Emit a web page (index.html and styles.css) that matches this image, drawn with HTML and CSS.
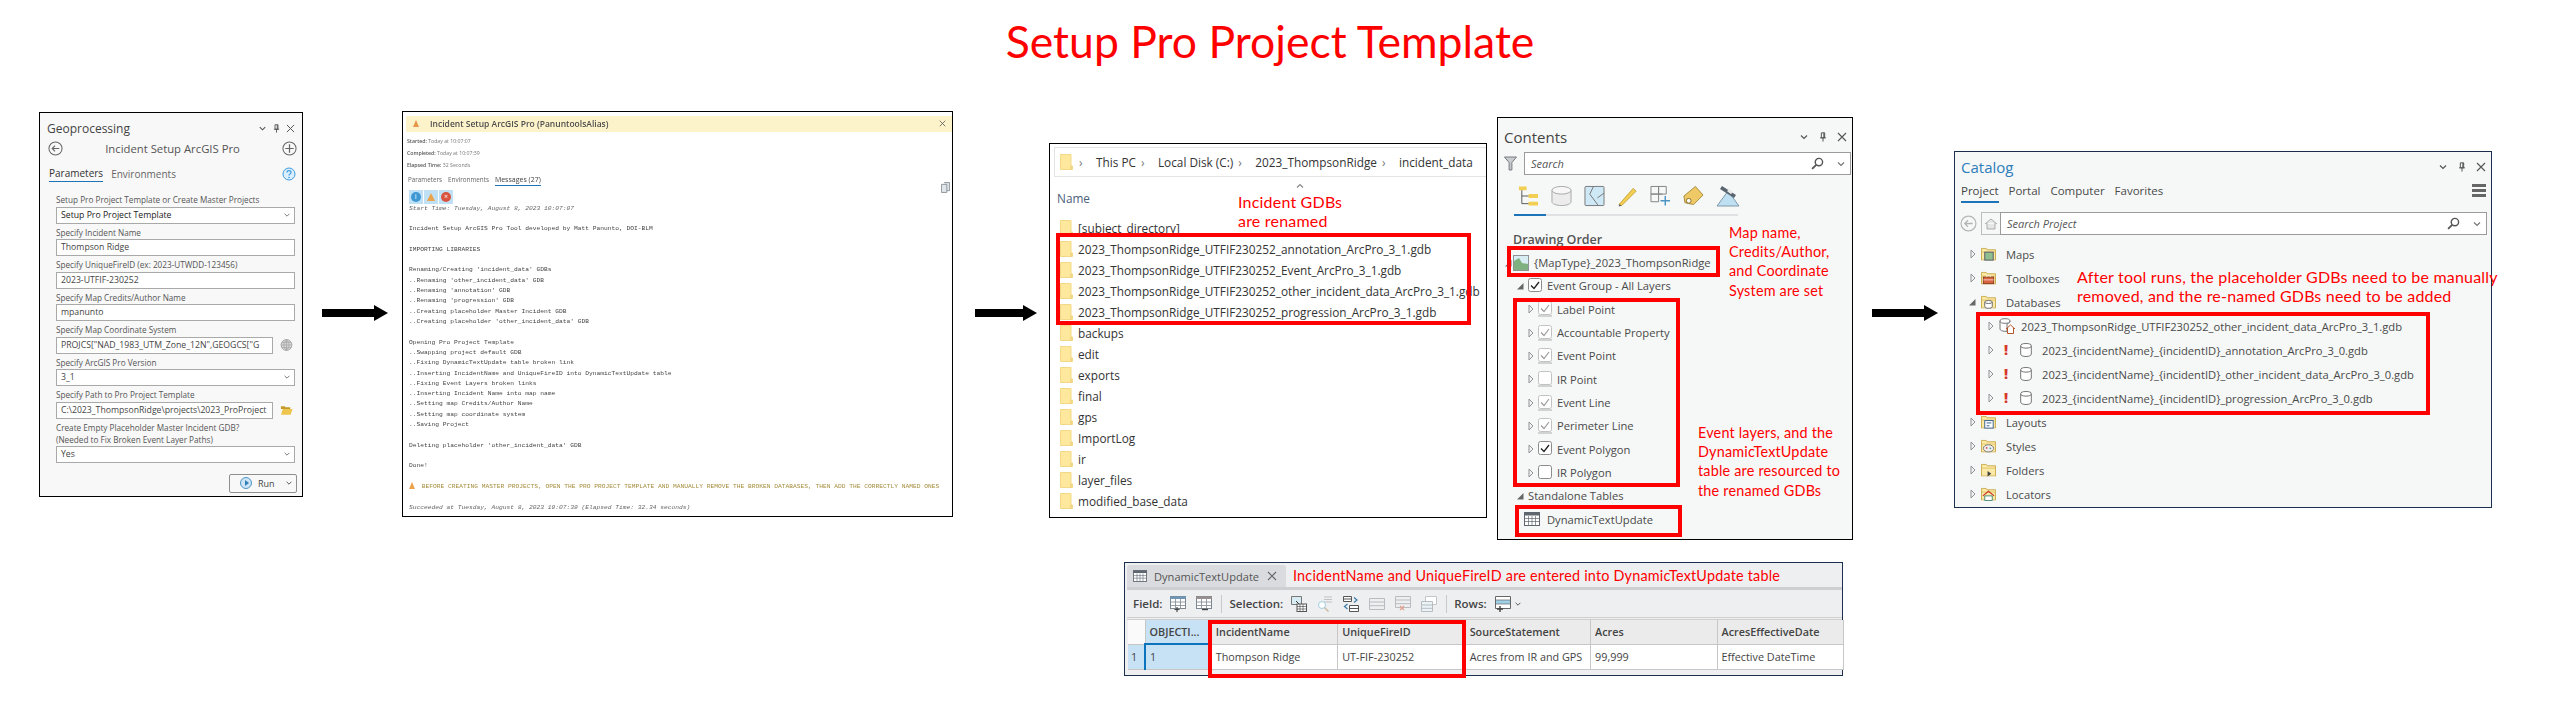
FILE: index.html
```html
<!DOCTYPE html>
<html lang="en">
<head>
  <meta charset="UTF-8">
  <title>Setup Pro Project Template</title>
  <link rel="stylesheet" href="styles.css">
</head>
<body>
  <svg class="sprite" width="0" height="0">
    <defs>
      <symbol id="chev" viewBox="0 0 10 10"><path d="M2 3.500 5 6.500 8 3.500" fill="none" stroke="currentColor" stroke-width="1.200"/></symbol>
      <symbol id="pin" viewBox="0 0 10 12"><path d="M3 1h4v6H3zM1.500 7h7M5 7v4.500M6 1v6" fill="none" stroke="currentColor" stroke-width="1.200"/></symbol>
      <symbol id="close" viewBox="0 0 10 10"><path d="M1 1 9 9M9 1 1 9" fill="none" stroke="currentColor" stroke-width="1.100"/></symbol>
      <symbol id="back" viewBox="0 0 16 16"><circle cx="8" cy="8" r="7" fill="none" stroke="currentColor" stroke-width="1.100"/><path d="M12 8H4.500M7.500 5 4.500 8l3 3" fill="none" stroke="currentColor" stroke-width="1.200"/></symbol>
      <symbol id="plus" viewBox="0 0 16 16"><circle cx="8" cy="8" r="7" fill="none" stroke="currentColor" stroke-width="1.100"/><path d="M8 3.500v9M3.500 8h9" stroke="currentColor" stroke-width="1.300"/></symbol>
      <symbol id="help" viewBox="0 0 14 14"><circle cx="7" cy="7" r="6" fill="#dcefff" stroke="#3d9be0"/><path d="M5 5.400C5 3 9 3 9 5.400 9 7 7 6.800 7 8.600" fill="none" stroke="#3d9be0" stroke-width="1.200"/><circle cx="7" cy="10.500" r=".8" fill="#3d9be0"/></symbol>
      <symbol id="globe" viewBox="0 0 14 14"><circle cx="7" cy="7" r="6.300" fill="#d8d8d8" stroke="#9a9a9a"/><path d="M1 7h12M7 1v12M2 4h10M2 10h10M7 1C3 4 3 10 7 13M7 1c4 3 4 9 0 12" fill="none" stroke="#9a9a9a" stroke-width=".7"/></symbol>
      <symbol id="openfolder" viewBox="0 0 14 12"><path d="M1 2h4l1 1h5v2H1z" fill="#c49a2a"/><path d="M1 11 3 5h10.500l-2 6z" fill="#eec64e"/></symbol>
      <symbol id="efolder" viewBox="0 0 13 16"><path d="M.5.500h10.500v11.500h1.500v3.500H.5z" fill="#fee89d" stroke="#f3d985"/><path d="M11 12v3.500" stroke="#e6c870"/></symbol>
      <symbol id="caret" viewBox="0 0 6 10"><path d="M1 1 5 5 1 9z" fill="#f3f3f3" stroke="#8f9396"/></symbol>
      <symbol id="caretdown" viewBox="0 0 8 8"><path d="M7.500 1v6.500H1z" fill="#666"/></symbol>
      <symbol id="boxon" viewBox="0 0 14 16"><rect x=".5" y=".5" width="13" height="13" rx="2" fill="#fff" stroke="#8c8c8c"/><path d="M3 7.500 6 10.500 11 4" fill="none" stroke="#222" stroke-width="1.300"/></symbol>
      <symbol id="boxdim" viewBox="0 0 14 16"><rect x=".5" y=".5" width="13" height="13" rx="2" fill="#fff" stroke="#c2c2c2"/><path d="M3 7.500 6 10.500 11 4" fill="none" stroke="#9c9c9c" stroke-width="1.200"/><path d="M0 15h14" stroke="#c9c9c9" stroke-width="1.600"/></symbol>
      <symbol id="boxoffdim" viewBox="0 0 14 16"><rect x=".5" y=".5" width="13" height="13" rx="2" fill="#fff" stroke="#c2c2c2"/><path d="M0 15h14" stroke="#c9c9c9" stroke-width="1.600"/></symbol>
      <symbol id="boxoff" viewBox="0 0 14 16"><rect x=".5" y=".5" width="13" height="13" rx="2" fill="#fff" stroke="#8c8c8c"/></symbol>
      <symbol id="mapicon" viewBox="0 0 16 16"><rect x=".5" y=".5" width="15" height="15" fill="#d7ecf3" stroke="#8f9396"/><path d="M1 15V6l5-3 3 5 6 1v6z" fill="#7fb07f"/></symbol>
      <symbol id="table" viewBox="0 0 16 14"><rect x=".5" y=".5" width="15" height="13" fill="#fff" stroke="#5f6670"/><path d="M0 .5h16v3H0z" fill="#5f6670"/><path d="M1 6.500h14M1 9.500h14M4.500 4v9M8 4v9M11.500 4v9" stroke="#5f6670" stroke-width=".7"/></symbol>
      <symbol id="gdb" viewBox="0 0 12 14"><path d="M.7 2.800v8.400c0 1.300 2.400 2.300 5.300 2.300s5.300-1 5.300-2.300V2.800" fill="#fff" stroke="#777"/><ellipse cx="6" cy="2.800" rx="5.300" ry="2.300" fill="#fff" stroke="#777"/></symbol>
      <symbol id="gdbhome" viewBox="0 0 16 16"><path d="M1 3v8c0 1.300 2.200 2.300 5 2.300h2V6l3-2V3" fill="#fff" stroke="#777"/><ellipse cx="6" cy="3" rx="5" ry="2.300" fill="#fff" stroke="#777"/><path d="M7 11l4.500-4 4.500 4M8.500 10v5.500h6V10" fill="#fff" stroke="#b4572a"/></symbol>
      <symbol id="catfolder" viewBox="0 0 16 14"><path d="M.5 2.500V1h5l1 1.500h9v11H.5z" fill="#fbe9a8" stroke="#c8a848"/><path d="M.5 5h15" stroke="#e1c363"/></symbol>
      <symbol id="cat-maps" viewBox="0 0 16 14"><use href="#catfolder" width="16" height="14"/><rect x="4" y="5" width="9" height="8.500" fill="#8fbf8f" stroke="#556"/></symbol>
      <symbol id="cat-tool" viewBox="0 0 16 14"><use href="#catfolder" width="16" height="14"/><rect x="2.500" y="6" width="11" height="7" fill="#d9623f" stroke="#8a3a22"/><path d="M6 6V4.500h4V6M2.500 9h11" fill="none" stroke="#fff" stroke-width=".7"/></symbol>
      <symbol id="cat-db" viewBox="0 0 16 14"><use href="#catfolder" width="16" height="14"/><path d="M4 7v5c0 1 1.800 1.700 4 1.700s4-.7 4-1.700V7" fill="#fff" stroke="#666"/><ellipse cx="8" cy="7" rx="4" ry="1.600" fill="#fff" stroke="#666"/></symbol>
      <symbol id="cat-layout" viewBox="0 0 16 14"><use href="#catfolder" width="16" height="14"/><rect x="4" y="5.500" width="9" height="8" fill="#fff" stroke="#2f5f8f"/><path d="M6 8h5M6 11h3" stroke="#2f5f8f"/></symbol>
      <symbol id="cat-style" viewBox="0 0 16 14"><use href="#catfolder" width="16" height="14"/><ellipse cx="8" cy="9.500" rx="5.500" ry="3.800" fill="#eee" stroke="#777"/><circle cx="6" cy="9" r="1" fill="#c55"/><circle cx="10" cy="9.500" r="1" fill="#59a"/></symbol>
      <symbol id="cat-folder" viewBox="0 0 16 14"><use href="#catfolder" width="16" height="14"/><path d="M7 8l4 3-4 3z" fill="#444"/></symbol>
      <symbol id="cat-loc" viewBox="0 0 16 14"><use href="#catfolder" width="16" height="14"/><path d="M2 9l6-5 6 5" fill="none" stroke="#c9352a" stroke-width="1.300"/><path d="M4 9h8v5H4z" fill="#fff" stroke="#3f8a6f"/></symbol>
      <symbol id="search" viewBox="0 0 12 12"><circle cx="7.300" cy="4.700" r="3.400" fill="none" stroke="currentColor" stroke-width="1.300"/><path d="M4.800 7.200 1 11" stroke="currentColor" stroke-width="1.700"/></symbol>
      <symbol id="tb-add" viewBox="0 0 16 16"><rect x=".5" y=".5" width="15" height="12" fill="#fff" stroke="#7e8892"/><path d="M0 .5h16v2.500H0z" fill="#6f97b5"/><path d="M1 6h14M1 9.500h14M5.500 3v10M10.500 3v10" stroke="#7e8892" stroke-width=".8"/><path d="M7 11v5M4.500 13.500h5" stroke="#444" stroke-width="1.200"/></symbol>
      <symbol id="tb-del" viewBox="0 0 16 16"><rect x=".5" y=".5" width="15" height="12" fill="#fff" stroke="#7e8892"/><path d="M0 .5h16v2.500H0z" fill="#9a8f8f"/><path d="M1 6h14M1 9.500h14M5.500 3v10M10.500 3v10" stroke="#7e8892" stroke-width=".8"/><path d="M6 13.500h6" stroke="#444" stroke-width="1.400"/></symbol>
      <symbol id="tb-sel" viewBox="0 0 16 16"><path d="M.5.500h10v8h-10z" fill="#d7ecf3" stroke="#777"/><path d="M5 5l3 3" stroke="#333"/><rect x="6" y="8" width="9.500" height="7.500" fill="#fff" stroke="#555"/><path d="M6 10.500h10M6 13h10M9 8v8M12 8v8" stroke="#555" stroke-width=".7"/></symbol>
      <symbol id="tb-zoom" viewBox="0 0 16 16"><path d="M7 1h8M7 3.500h8M7 6h8" stroke="#bfc3c7"/><circle cx="5" cy="9" r="3.500" fill="#fff" stroke="#9fd0de"/><path d="M7.500 11.500l4 4" stroke="#c9b9a0" stroke-width="1.500"/></symbol>
      <symbol id="tb-swap" viewBox="0 0 16 16"><path d="M.5.500h8v5h-8zM6.500 9.500h9v6h-9zM.5 3h8M6.500 12.500h9" fill="#fff" stroke="#555"/><path d="M11 1.500l3 2.500-3 2.500M4.500 8 1.500 10.500 4.500 13" fill="none" stroke="#3a7aa8" stroke-width="1.200"/></symbol>
      <symbol id="tb-lines" viewBox="0 0 16 14"><path d="M.5 1.500h15v11H.5zM.5 5h15M.5 8.700h15" fill="none" stroke="#b8bcc0"/></symbol>
      <symbol id="tb-x" viewBox="0 0 16 16"><path d="M.5.500h15v11H.5zM.5 4h15M.5 7.700h15" fill="none" stroke="#b8bcc0"/><path d="M5 10l4 4M9 10l-4 4" stroke="#e3a08f" stroke-width="1.300"/></symbol>
      <symbol id="tb-copy" viewBox="0 0 16 16"><path d="M4.500.500h11v8h-11z" fill="#fff" stroke="#c3c7cb"/><path d="M.5 5.500h11v10H.5zM.5 9h11M.5 12.300h11" fill="#eaf4f8" stroke="#b8bcc0"/></symbol>
      <symbol id="tb-rows" viewBox="0 0 16 16"><path d="M.5.500h15v12H.5z" fill="#fff" stroke="#666"/><path d="M1 4h14v4H1z" fill="#9fd0e6"/><path d="M1 4h14M1 8h14" stroke="#666" stroke-width=".7"/><path d="M5 10v6M2 13h6" stroke="#444" stroke-width="1.400"/></symbol>
    </defs>
  </svg>

  <h1 class="page-title">Setup Pro Project Template</h1>

  <main class="top-row">
    <!-- geoprocessing pane -->
    <section class="panel gp">
      <div class="pane-head">
        <span class="gp-title">Geoprocessing</span>
        <span class="win-btns"><svg class="wb"><use href="#chev"/></svg><svg class="wb"><use href="#pin"/></svg><svg class="wb"><use href="#close"/></svg></span>
      </div>
      <div class="gp-tool">
        <svg class="gp-round"><use href="#back"/></svg>
        <span class="gp-tool-name">Incident Setup ArcGIS Pro</span>
        <svg class="gp-round"><use href="#plus"/></svg>
      </div>
      <div class="gp-tabs">
        <span class="gp-tab on">Parameters</span>
        <span class="gp-tab">Environments</span>
        <svg class="gp-help"><use href="#help"/></svg>
      </div>
      <div class="gp-fields">
        <div class="field"><label>Setup Pro Project Template or Create Master Projects</label><div class="inp strong">Setup Pro Project Template<svg class="inp-chev"><use href="#chev"/></svg></div></div>
        <div class="field"><label>Specify Incident Name</label><div class="inp">Thompson Ridge</div></div>
        <div class="field"><label>Specify UniqueFireID (ex: 2023-UTWDD-123456)</label><div class="inp">2023-UTFIF-230252</div></div>
        <div class="field"><label>Specify Map Credits/Author Name</label><div class="inp">mpanunto</div></div>
        <div class="field"><label>Specify Map Coordinate System</label><div class="inp-row"><div class="inp clip">PROJCS["NAD_1983_UTM_Zone_12N",GEOGCS["G</div><svg class="inp-side"><use href="#globe"/></svg></div></div>
        <div class="field"><label>Specify ArcGIS Pro Version</label><div class="inp">3_1<svg class="inp-chev"><use href="#chev"/></svg></div></div>
        <div class="field"><label>Specify Path to Pro Project Template</label><div class="inp-row"><div class="inp clip">C:\2023_ThompsonRidge\projects\2023_ProProject</div><svg class="inp-side"><use href="#openfolder"/></svg></div></div>
        <div class="field tall"><label>Create Empty Placeholder Master Incident GDB?<br>(Needed to Fix Broken Event Layer Paths)</label><div class="inp">Yes<svg class="inp-chev"><use href="#chev"/></svg></div></div>
      </div>
      <div class="gp-foot">
        <button class="run-btn"><span class="run-dot"></span>Run<svg class="run-chev"><use href="#chev"/></svg></button>
      </div>
    </section>

    <svg class="arrow arrow-a" viewBox="0 0 66 16"><path d="M0 4h52V0l14 8-14 8v-4H0z"/></svg>

    <!-- tool result -->
    <section class="panel result">
      <div class="res-bar">
        <span class="res-warn"></span>
        <span class="res-title">Incident Setup ArcGIS Pro (PanuntoolsAlias)</span>
        <svg class="res-close"><use href="#close"/></svg>
      </div>
      <ul class="res-meta">
        <li><b>Started:</b> Today at 10:07:07</li>
        <li><b>Completed:</b> Today at 10:07:39</li>
        <li><b>Elapsed Time:</b> 32 Seconds</li>
      </ul>
      <div class="res-tabs"><span>Parameters</span><span>Environments</span><span class="on">Messages (27)</span></div>
      <div class="res-icons">
        <span class="res-ic"><i class="dot-info">i</i></span>
        <span class="res-ic"><i class="tri"></i></span>
        <span class="res-ic"><i class="dot-err">×</i></span>
      </div>
      <pre class="res-log"><em>Start Time: Tuesday, August 8, 2023 10:07:07</em>

Incident Setup ArcGIS Pro Tool developed by Matt Panunto, DOI-BLM

IMPORTING LIBRARIES

Renaming/Creating 'incident_data' GDBs
..Renaming 'other_incident_data' GDB
..Renaming 'annotation' GDB
..Renaming 'progression' GDB
..Creating placeholder Master Incident GDB
..Creating placeholder 'other_incident_data' GDB

Opening Pro Project Template
..Swapping project default GDB
..Fixing DynamicTextUpdate table broken link
..Inserting IncidentName and UniqueFireID into DynamicTextUpdate table
..Fixing Event Layers broken links
..Inserting Incident Name into map name
..Setting map Credits/Author Name
..Setting map coordinate system
..Saving Project

Deleting placeholder 'other_incident_data' GDB

Done!

<span class="log-warn"><i class="tri"></i> BEFORE CREATING MASTER PROJECTS, OPEN THE PRO PROJECT TEMPLATE AND MANUALLY REMOVE THE BROKEN DATABASES, THEN ADD THE CORRECTLY NAMED ONES</span>

<em>Succeeded at Tuesday, August 8, 2023 10:07:39 (Elapsed Time: 32.34 seconds)</em></pre>
      <svg class="res-copy" viewBox="0 0 10 12"><path d="M.5 2.500h6v9h-6zM3.500.5h6v9h-3" fill="#dfe6ea" stroke="#8a8f94"/></svg>
    </section>

    <svg class="arrow arrow-b" viewBox="0 0 62 16"><path d="M0 4h48V0l14 8-14 8v-4H0z"/></svg>

    <!-- windows explorer -->
    <section class="panel explorer">
      <div class="crumbs">
        <svg class="crumb-folder"><use href="#efolder"/></svg>
        <span class="crumb-sep">›</span><span>This PC</span>
        <span class="crumb-sep">›</span><span>Local Disk (C:)</span>
        <span class="crumb-sep">›</span><span>2023_ThompsonRidge</span>
        <span class="crumb-sep">›</span><span>incident_data</span>
      </div>
      <div class="name-head"><span>Name</span><svg class="sort-up"><use href="#chev"/></svg></div>
      <ul class="files">
        <li><svg class="fi"><use href="#efolder"/></svg>[subject_directory]</li>
        <li><svg class="fi"><use href="#efolder"/></svg>2023_ThompsonRidge_UTFIF230252_annotation_ArcPro_3_1.gdb</li>
        <li><svg class="fi"><use href="#efolder"/></svg>2023_ThompsonRidge_UTFIF230252_Event_ArcPro_3_1.gdb</li>
        <li><svg class="fi"><use href="#efolder"/></svg>2023_ThompsonRidge_UTFIF230252_other_incident_data_ArcPro_3_1.gdb</li>
        <li><svg class="fi"><use href="#efolder"/></svg>2023_ThompsonRidge_UTFIF230252_progression_ArcPro_3_1.gdb</li>
        <li><svg class="fi"><use href="#efolder"/></svg>backups</li>
        <li><svg class="fi"><use href="#efolder"/></svg>edit</li>
        <li><svg class="fi"><use href="#efolder"/></svg>exports</li>
        <li><svg class="fi"><use href="#efolder"/></svg>final</li>
        <li><svg class="fi"><use href="#efolder"/></svg>gps</li>
        <li><svg class="fi"><use href="#efolder"/></svg>ImportLog</li>
        <li><svg class="fi"><use href="#efolder"/></svg>ir</li>
        <li><svg class="fi"><use href="#efolder"/></svg>layer_files</li>
        <li><svg class="fi"><use href="#efolder"/></svg>modified_base_data</li>
      </ul>
      <p class="note big note-gdb">Incident GDBs<br>are renamed</p>
      <div class="hl hl-gdb"></div>
    </section>

    <!-- contents pane -->
    <section class="panel contents">
      <div class="pane-head">
        <span class="pane-title">Contents</span>
        <span class="win-btns big"><svg class="wb"><use href="#chev"/></svg><svg class="wb"><use href="#pin"/></svg><svg class="wb"><use href="#close"/></svg></span>
      </div>
      <div class="con-search">
        <svg class="con-filter" viewBox="0 0 14 16"><path d="M.5 1h13L8.500 7v8h-3V7z" fill="#c9cccf" stroke="#6f7377"/></svg>
        <div class="search-box"><em>Search</em><svg class="sb-ic"><use href="#search"/></svg><svg class="sb-chev"><use href="#chev"/></svg></div>
      </div>
      <div class="con-tools">
        <svg class="ct" viewBox="0 0 22 22"><path d="M1 1h8v4H1zM11 9h10v4H11zM11 17h10v4H11z" fill="#f2cf52"/><path d="M4 5v14h7M4 11h7" fill="none" stroke="#555"/></svg>
        <svg class="ct" viewBox="0 0 22 22"><path d="M1 5v12c0 2.200 4.500 4 10 4s10-1.800 10-4V5" fill="#ececec" stroke="#a6a6a6"/><ellipse cx="11" cy="5" rx="10" ry="4" fill="#f7f7f7" stroke="#a6a6a6"/></svg>
        <svg class="ct" viewBox="0 0 22 22"><rect x="1" y="1" width="20" height="20" rx="1" fill="#cfe8f5" stroke="#777"/><path d="M10 1 6 9l9 12M14 13l7-5" fill="none" stroke="#777"/></svg>
        <svg class="ct" viewBox="0 0 22 22"><path d="M2 20 17 3l3 3L5 21z" fill="#f2cf52" stroke="#b38d23" stroke-width=".7"/><path d="M2 20l3 1-3 1z" fill="#555"/></svg>
        <svg class="ct" viewBox="0 0 22 22"><path d="M1 1h8v8H1zM9 1h8v8H9zM1 9h8v8H1zM9 9h4" fill="none" stroke="#808080"/><path d="M16 11v10M11 16h10" stroke="#4b94c4" stroke-width="1.500"/></svg>
        <svg class="ct" viewBox="0 0 22 22"><path d="M13 1l8 9-10 10-9-2-1-7z" fill="#efc966" stroke="#a58a3b"/><circle cx="6" cy="16" r="2.500" fill="#fff" stroke="#8a6d28"/></svg>
        <svg class="ct wide" viewBox="0 0 24 22"><path d="M1 21 12 6l11 15z" fill="#bfe0f2" stroke="#7e98a8"/><path d="M6 1l14 9-2 3L4 4z" fill="#5a6570"/><path d="M12 5l4 3" stroke="#e8e8e8" stroke-width="3"/></svg>
      </div>
      <div class="con-rule"><span></span></div>
      <div class="con-heading">Drawing Order</div>
      <ul class="tree">
        <li class="row-map"><svg class="cd"><use href="#caretdown"/></svg><svg class="ic16"><use href="#mapicon"/></svg>{MapType}_2023_ThompsonRidge</li>
        <li class="row-group"><svg class="cd"><use href="#caretdown"/></svg><svg class="chk"><use href="#boxon"/></svg>Event Group - All Layers</li>
        <li class="row-layer"><svg class="cr"><use href="#caret"/></svg><svg class="chk"><use href="#boxdim"/></svg>Label Point</li>
        <li class="row-layer"><svg class="cr"><use href="#caret"/></svg><svg class="chk"><use href="#boxdim"/></svg>Accountable Property</li>
        <li class="row-layer"><svg class="cr"><use href="#caret"/></svg><svg class="chk"><use href="#boxdim"/></svg>Event Point</li>
        <li class="row-layer"><svg class="cr"><use href="#caret"/></svg><svg class="chk"><use href="#boxoffdim"/></svg>IR Point</li>
        <li class="row-layer"><svg class="cr"><use href="#caret"/></svg><svg class="chk"><use href="#boxdim"/></svg>Event Line</li>
        <li class="row-layer"><svg class="cr"><use href="#caret"/></svg><svg class="chk"><use href="#boxdim"/></svg>Perimeter Line</li>
        <li class="row-layer"><svg class="cr"><use href="#caret"/></svg><svg class="chk"><use href="#boxon"/></svg>Event Polygon</li>
        <li class="row-layer"><svg class="cr"><use href="#caret"/></svg><svg class="chk"><use href="#boxoff"/></svg>IR Polygon</li>
        <li class="row-group"><svg class="cd"><use href="#caretdown"/></svg>Standalone Tables</li>
        <li class="row-table"><svg class="ic16"><use href="#table"/></svg>DynamicTextUpdate</li>
      </ul>
      <p class="note mid note-map">Map name,<br>Credits/Author,<br>and Coordinate<br>System are set</p>
      <p class="note mid note-layers">Event layers, and the<br>DynamicTextUpdate<br>table are resourced to<br>the renamed GDBs</p>
      <div class="hl hl-map"></div>
      <div class="hl hl-layers"></div>
      <div class="hl hl-table"></div>
    </section>

    <svg class="arrow arrow-c" viewBox="0 0 66 16"><path d="M0 4h52V0l14 8-14 8v-4H0z"/></svg>

    <!-- catalog pane -->
    <section class="panel catalog">
      <div class="pane-head">
        <span class="pane-title blue">Catalog</span>
        <span class="win-btns big"><svg class="wb"><use href="#chev"/></svg><svg class="wb"><use href="#pin"/></svg><svg class="wb"><use href="#close"/></svg></span>
      </div>
      <div class="cat-tabs">
        <span class="on">Project</span><span>Portal</span><span>Computer</span><span>Favorites</span>
        <i class="burger"></i>
      </div>
      <div class="cat-search">
        <svg class="cat-back"><use href="#back"/></svg>
        <div class="cat-home"><svg viewBox="0 0 12 12"><path d="M0 6l6-5 6 5M2 5v6h8V5" fill="#e6e6e6" stroke="#aaa"/></svg></div>
        <div class="search-box"><em>Search Project</em><svg class="sb-ic"><use href="#search"/></svg><svg class="sb-chev"><use href="#chev"/></svg></div>
      </div>
      <ul class="cat-tree">
        <li><svg class="cr"><use href="#caret"/></svg><svg class="cf"><use href="#cat-maps"/></svg>Maps</li>
        <li><svg class="cr"><use href="#caret"/></svg><svg class="cf"><use href="#cat-tool"/></svg>Toolboxes</li>
        <li><svg class="cd"><use href="#caretdown"/></svg><svg class="cf"><use href="#cat-db"/></svg>Databases</li>
        <li class="db home"><svg class="cr"><use href="#caret"/></svg><svg class="dbh"><use href="#gdbhome"/></svg>2023_ThompsonRidge_UTFIF230252_other_incident_data_ArcPro_3_1.gdb</li>
        <li class="db"><svg class="cr"><use href="#caret"/></svg><span class="bang">!</span><svg class="dbi"><use href="#gdb"/></svg>2023_{incidentName}_{incidentID}_annotation_ArcPro_3_0.gdb</li>
        <li class="db"><svg class="cr"><use href="#caret"/></svg><span class="bang">!</span><svg class="dbi"><use href="#gdb"/></svg>2023_{incidentName}_{incidentID}_other_incident_data_ArcPro_3_0.gdb</li>
        <li class="db"><svg class="cr"><use href="#caret"/></svg><span class="bang">!</span><svg class="dbi"><use href="#gdb"/></svg>2023_{incidentName}_{incidentID}_progression_ArcPro_3_0.gdb</li>
        <li><svg class="cr"><use href="#caret"/></svg><svg class="cf"><use href="#cat-layout"/></svg>Layouts</li>
        <li><svg class="cr"><use href="#caret"/></svg><svg class="cf"><use href="#cat-style"/></svg>Styles</li>
        <li><svg class="cr"><use href="#caret"/></svg><svg class="cf"><use href="#cat-folder"/></svg>Folders</li>
        <li><svg class="cr"><use href="#caret"/></svg><svg class="cf"><use href="#cat-loc"/></svg>Locators</li>
      </ul>
      <p class="note big note-cat">After tool runs, the placeholder GDBs need to be manually<br>removed, and the re-named GDBs need to be added</p>
      <div class="hl hl-cat"></div>
    </section>
  </main>

  <!-- attribute table -->
  <div class="bottom-row">
    <section class="panel attr">
      <div class="attr-tabs">
        <div class="attr-tab"><svg class="tab-ic"><use href="#table"/></svg>DynamicTextUpdate<svg class="tab-x"><use href="#close"/></svg></div>
        <span class="note mid note-attr">IncidentName and UniqueFireID are entered into DynamicTextUpdate table</span>
      </div>
      <div class="attr-bar">
        <b>Field:</b><svg class="tb"><use href="#tb-add"/></svg><svg class="tb"><use href="#tb-del"/></svg><i class="tb-div"></i>
        <b>Selection:</b><svg class="tb"><use href="#tb-sel"/></svg><svg class="tb"><use href="#tb-zoom"/></svg><svg class="tb"><use href="#tb-swap"/></svg><svg class="tb"><use href="#tb-lines"/></svg><svg class="tb"><use href="#tb-x"/></svg><svg class="tb"><use href="#tb-copy"/></svg><i class="tb-div"></i>
        <b>Rows:</b><svg class="tb"><use href="#tb-rows"/></svg><svg class="tb-chev"><use href="#chev"/></svg>
      </div>
      <table class="grid">
        <colgroup><col class="c-num"><col class="c-oid"><col class="c-name"><col class="c-uid"><col class="c-src"><col class="c-acres"><col class="c-date"></colgroup>
        <thead>
          <tr><th class="corner"></th><th class="oid">OBJECTI...</th><th>IncidentName</th><th>UniqueFireID</th><th>SourceStatement</th><th>Acres</th><th>AcresEffectiveDate</th></tr>
        </thead>
        <tbody>
          <tr><td class="num">1</td><td class="sel">1</td><td>Thompson Ridge</td><td>UT-FIF-230252</td><td>Acres from IR and GPS</td><td>99,999</td><td>Effective DateTime</td></tr>
        </tbody>
      </table>
      <div class="hl hl-attr"></div>
    </section>
  </div>
</body>
</html>
```

FILE: styles.css
```css
* {
  box-sizing: border-box;
}

html, body {
  margin: 0;
  padding: 0;
  height: 718px;
  overflow: hidden;
}

body {
  background: #fff;
  font-family: "Open Sans", "Liberation Sans", sans-serif;
  color: #4a4a4a;
}

ul {
  list-style: none;
  margin: 0;
  padding: 0;
}

svg {
  flex: none;
  display: block;
}

.sprite {
  position: absolute;
}

.page-title {
  margin: 0;
  height: 111px;
  padding: 12px 28px 0 0;
  text-align: center;
  font: 400 44.5px/58px Lato, sans-serif;
  color: #f00;
}

.top-row {
  display: flex;
  align-items: flex-start;
  padding-left: 39px;
  height: 429px;
}

.bottom-row {
  display: flex;
  padding: 22px 0 0 1124px;
}

.panel {
  position: relative;
  flex: none;
  border: 1.5px solid #000;
  background: #f6f8f7;
}

.arrow {
  flex: none;
  height: 16px;
  margin-top: 194px;
  fill: #000;
}

.arrow-a { width: 66px; margin-left: 19px; }
.arrow-b { width: 62px; margin-left: 22px; }
.arrow-c { width: 66px; margin-left: 19px; }

/* red call-outs */
.note {
  position: absolute;
  margin: 0;
  font: 400 16px/19.2px Lato, sans-serif;
  color: #f00;
  letter-spacing: .2px;
  white-space: nowrap;
}

.note.mid {
  font-size: 14.400px;
}

.hl {
  position: absolute;
  border: 4px solid #f00;
}

/* shared pane header */
.pane-head {
  display: flex;
  justify-content: space-between;
  align-items: center;
}

.win-btns {
  display: flex;
  align-items: center;
  gap: 5px;
  color: #555;
}

.wb {
  width: 9px;
  height: 9px;
}

.win-btns.big {
  gap: 9px;
}

.win-btns.big .wb {
  width: 10px;
  height: 10px;
}

.pane-title {
  font-size: 15px;
  line-height: 20px;
  color: #444;
}

.pane-title.blue {
  color: #2e7dbb;
}

.search-box {
  position: relative;
  flex: 1;
  display: flex;
  align-items: center;
  height: 23px;
  padding-left: 6px;
  background: #fff;
  border: 1px solid #9b9b9b;
  font-size: 11px;
}

.search-box em {
  color: #555;
}

.sb-ic {
  position: absolute;
  right: 26px;
  top: 4px;
  width: 13px;
  height: 13px;
  color: #555;
}

.sb-chev {
  position: absolute;
  right: 4px;
  top: 6px;
  width: 10px;
  height: 10px;
  color: #777;
}

.cr {
  width: 6px;
  height: 10px;
}

.cd {
  width: 8px;
  height: 8px;
}

/* geoprocessing */
.gp {
  width: 264px;
  height: 385px;
  margin-top: 1px;
  padding: 0 5px 0 6px;
  background: #f8f8f8;
  font-size: 8.200px;
}

.gp .pane-head {
  height: 28px;
  padding: 2px 2px 0 1px;
}

.gp-title {
  font-size: 12px;
  color: #444;
}

.gp-tool {
  display: flex;
  justify-content: space-between;
  align-items: center;
  height: 15px;
  padding: 0 0 0 2px;
}

.gp-round {
  width: 15px;
  height: 15px;
  color: #666;
}

.gp-tool-name {
  font-size: 11.300px;
  color: #555;
}

.gp-tabs {
  display: flex;
  align-items: center;
  gap: 8px;
  height: 20px;
  margin-top: 8px;
  padding: 0 1px 0 3px;
  font-size: 10px;
  color: #666;
}

.gp-tab.on {
  color: #333;
  border-bottom: 1.500px solid #1d74b8;
  padding-bottom: 1px;
}

.gp-help {
  width: 14px;
  height: 14px;
  margin-left: auto;
}

.gp-fields {
  margin: 7px 0 0 10px;
  padding-right: 2px;
}

.field {
  height: 32.500px;
}

.field.tall {
  height: 44px;
}

.field label {
  display: block;
  height: 15.500px;
  line-height: 12px;
  padding-top: 3px;
  color: #555;
  white-space: nowrap;
}

.field.tall label {
  height: 27px;
}

.inp {
  position: relative;
  height: 17px;
  padding-left: 4px;
  font-size: 8.700px;
  line-height: 15px;
  background: #fff;
  border: 1px solid #a9a9a9;
  border-bottom-width: 1.500px;
  color: #444;
  white-space: nowrap;
  overflow: hidden;
}

.inp.strong {
  color: #222;
  font-weight: 500;
}

.inp-chev {
  position: absolute;
  right: 3px;
  top: 3px;
  width: 8px;
  height: 8px;
  color: #777;
}

.inp-row {
  display: flex;
  align-items: center;
}

.inp.clip {
  width: 217px;
}

.inp-side {
  width: 13px;
  height: 12px;
  margin-left: 7px;
}

.gp-foot {
  display: flex;
  justify-content: flex-end;
  margin-top: 11px;
}

.run-btn {
  display: flex;
  align-items: center;
  width: 68px;
  height: 19px;
  padding: 0 0 0 10px;
  background: #f8f8f8;
  border: 1px solid #8f8f8f;
  border-radius: 2px;
  font: inherit;
  font-size: 9px;
  color: #444;
}

.run-dot {
  position: relative;
  width: 12px;
  height: 12px;
  margin-right: 6px;
  border-radius: 50%;
  background: #cfe5f7;
  border: 1px solid #4b94c4;
}

.run-dot::after {
  content: "";
  position: absolute;
  left: 3.500px;
  top: 2px;
  border: 3px solid transparent;
  border-left: 4px solid #2f7fb8;
  border-right: 0;
}

.run-chev {
  width: 8px;
  height: 8px;
  margin-left: auto;
  margin-right: 3px;
  color: #555;
}

/* tool result */
.result {
  width: 551px;
  height: 406px;
  margin-left: 14px;
  padding: 3.500px 0 0 3px;
  background: #fff;
  filter: blur(.25px);
}

.res-bar {
  display: flex;
  align-items: center;
  height: 16px;
  padding: 0 6px 0 7px;
  background: #fdf3cb;
  font-size: 8.500px;
  font-weight: 600;
  color: #4d4d4d;
}

.res-warn {
  width: 0;
  height: 0;
  margin-right: 11px;
  border: 3.500px solid transparent;
  border-top: 0;
  border-bottom: 7px solid #e8944a;
}

.res-title {
  flex: 1;
}

.res-close {
  width: 7px;
  height: 7px;
  color: #555;
}

.res-meta {
  padding: 3px 0 0 1px;
  font-size: 5.200px;
  line-height: 12px;
  color: #777;
}

.res-meta b {
  color: #555;
  font-weight: 600;
}

.res-tabs {
  display: flex;
  gap: 6px;
  height: 13px;
  padding: 3px 0 0 2px;
  margin-top: 2px;
  font-size: 6.300px;
  line-height: 8px;
  color: #666;
}

.res-tabs .on {
  font-size: 7px;
  color: #444;
  border-bottom: 1px solid #1d74b8;
}

.res-icons {
  display: flex;
  gap: 1px;
  margin: 4px 0 0 3px;
}

.res-ic {
  display: flex;
  align-items: center;
  justify-content: center;
  width: 14px;
  height: 14px;
  background: #bfe0f5;
}

.res-ic i {
  font-style: normal;
}

.dot-info, .dot-err {
  width: 10px;
  height: 10px;
  border-radius: 50%;
  color: #fff;
  font-size: 7px;
  line-height: 10px;
  text-align: center;
}

.dot-info { background: #3f97d4; }
.dot-err { background: #d9533f; }

.tri {
  display: inline-block;
  width: 0;
  height: 0;
  border: 4px solid transparent;
  border-top: 0;
  border-bottom: 8px solid #eba34e;
}

.res-log {
  margin: 0;
  padding: 0 0 0 3px;
  font: 400 6.250px/10.310px "Liberation Mono", monospace;
  color: #444;
}

.res-log em {
  color: #666;
}

.log-warn {
  color: #a58d3c;
}

.log-warn .tri {
  border-width: 3.500px;
  border-top: 0;
  border-bottom-width: 7px;
  margin-right: 3px;
  vertical-align: -1px;
}

.res-copy {
  position: absolute;
  right: 2px;
  top: 70px;
  width: 9px;
  height: 11px;
}

/* explorer */
.explorer {
  width: 438px;
  height: 375px;
  margin: 32px 0 0 12px;
  padding: 3px 0 0 4px;
  background: #fff;
  font-size: 11.800px;
  color: #333;
}

.crumbs {
  display: flex;
  align-items: center;
  height: 30px;
  padding-left: 5px;
  border: 1px solid #e4e4e4;
  border-right: 0;
  background: #fff;
  white-space: nowrap;
}

.crumbs .crumb-sep {
  width: 22px;
  padding-left: 5px;
  color: #777;
}

.crumb-folder {
  width: 13px;
  height: 16px;
  margin-right: 1px;
}

.name-head {
  position: relative;
  height: 40px;
  padding: 13px 0 0 3px;
  color: #4c607a;
  line-height: 16px;
}

.sort-up {
  position: absolute;
  left: 241px;
  top: 4px;
  width: 10px;
  height: 10px;
  color: #888;
  transform: rotate(180deg);
}

.files li {
  display: flex;
  align-items: center;
  gap: 5px;
  height: 21px;
  padding-left: 6px;
  white-space: nowrap;
}

.fi {
  width: 13px;
  height: 16px;
}

.note-gdb { left: 188px; top: 48px; }
.hl-gdb { left: 6px; top: 89px; width: 415px; height: 92px; }

/* contents */
.contents {
  width: 356px;
  height: 423px;
  margin: 6px 0 0 10px;
  padding: 9px 0 0 6px;
  font-size: 11.200px;
}

.contents .pane-head {
  padding-right: 5px;
}

.con-search {
  display: flex;
  align-items: center;
  gap: 7px;
  margin-top: 5px;
  padding-right: 1px;
}

.con-filter {
  width: 13px;
  height: 15px;
}

.con-tools {
  display: flex;
  align-items: center;
  gap: 12px;
  height: 22px;
  margin-top: 10px;
  padding-left: 14px;
}

.ct {
  width: 21px;
  height: 22px;
}

.ct.wide {
  width: 24px;
}

.con-rule {
  width: 224px;
  height: 2px;
  margin: 7px 0 0 10px;
  background: #dfe1e2;
}

.con-rule span {
  display: block;
  width: 32px;
  height: 2px;
  background: #1d74b8;
}

.con-heading {
  margin: 15px 0 0 9px;
  font-size: 12.500px;
  line-height: 18px;
  font-weight: 600;
  color: #555;
}

.tree {
  margin-top: 2px;
}

.tree li {
  display: flex;
  align-items: center;
  height: 23.330px;
  white-space: nowrap;
}

.row-map .cd { margin-right: 1px; }
.row-map .ic16 { margin-right: 5px; }

.row-group { padding-left: 12px; }
.row-group .cd { margin-right: 4px; }
.row-group .chk { margin-right: 5px; }

.row-layer { padding-left: 24px; }
.row-layer .cr { margin-right: 4px; }
.row-layer .chk { margin-right: 5px; }

.row-table { padding-left: 20px; }
.row-table .ic16 { margin-right: 7px; }

.ic16 {
  width: 16px;
  height: 16px;
}

.chk {
  width: 14px;
  height: 16px;
}

.note-map { left: 231px; top: 105px; }
.note-layers { left: 200px; top: 305px; }
.hl-map { left: 9px; top: 128px; width: 213px; height: 31px; }
.hl-layers { left: 15px; top: 180px; width: 167px; height: 189px; }
.hl-table { left: 17px; top: 387px; width: 167px; height: 32px; }

/* catalog */
.catalog {
  width: 538px;
  height: 357px;
  margin: 40px 0 0 16px;
  padding: 5px 0 0 6px;
  border-color: #1c2f4f;
  border-width: 1px;
  font-size: 11.200px;
}

.catalog .pane-head {
  padding-right: 5px;
}

.cat-tabs {
  position: relative;
  display: flex;
  gap: 10px;
  height: 22px;
  margin-top: 4px;
  font-size: 11.500px;
  line-height: 19px;
}

.cat-tabs .on {
  border-bottom: 2px solid #1d74b8;
  color: #444;
}

.burger {
  position: absolute;
  right: 5px;
  top: 3px;
  width: 14px;
  height: 13px;
  border-top: 3px solid #666;
  border-bottom: 3px solid #666;
  background: linear-gradient(#666, #666) center / 100% 3px no-repeat;
}

.cat-search {
  display: flex;
  align-items: center;
  margin: 9px 4px 0 -1px;
}

.cat-back {
  width: 17px;
  height: 17px;
  margin-right: 4px;
  color: #b5b5b5;
}

.cat-home {
  width: 19px;
  height: 23px;
  padding: 5px 3px;
  border: 1px solid #bdbdbd;
  border-right: 0;
}

.cat-tree {
  margin-top: 7px;
}

.cat-tree li {
  display: flex;
  align-items: center;
  height: 24px;
  padding-left: 9px;
  white-space: nowrap;
}

.cat-tree .cr { margin-right: 5px; }
.cat-tree .cd { margin: 0 5px 0 -2px; }

.cf {
  width: 15px;
  height: 14px;
  margin-right: 10px;
}

.cat-tree .db {
  padding-left: 27px;
}

.db .bang + .dbi {
  margin-left: 9px;
}

.db .cr { margin-right: 7px; }
.db.home .cr { margin-right: 5px; }

.dbh {
  width: 16px;
  height: 16px;
  margin-right: 6px;
}

.bang {
  width: 10px;
  color: #d8372a;
  font-size: 14px;
  font-weight: 800;
  line-height: 14px;
  text-align: center;
}

.dbi {
  width: 12px;
  height: 14px;
  margin-right: 10px;
}

.note-cat { left: 122px; top: 115px; }
.hl-cat { left: 21px; top: 160px; width: 454px; height: 103px; }

/* attribute table */
.attr {
  width: 719px;
  height: 114px;
  border-color: #1c2f4f;
  border-width: 1px;
  background: #eeeff1;
  padding: 2px 0 0 2px;
  font-size: 10.800px;
}

.attr-tabs {
  display: flex;
  align-items: center;
  height: 22px;
}

.attr-tab {
  display: flex;
  align-items: center;
  width: 159px;
  height: 22px;
  padding-left: 6px;
  background: #d9dbde;
  border-radius: 3px 3px 0 0;
  font-size: 11.100px;
  color: #555;
}

.tab-ic {
  width: 14px;
  height: 12px;
  margin-right: 7px;
}

.tab-x {
  width: 10px;
  height: 10px;
  margin-left: 8px;
  color: #666;
}

.note-attr {
  position: static;
  margin-left: 7px;
}

.attr-bar {
  display: flex;
  align-items: center;
  height: 33px;
  padding-left: 6px;
  border-top: 3px solid #cdcfd3;
  border-bottom: 3px double #cfcfcf;
  font-size: 11.500px;
  color: #444;
}

.attr-bar b {
  font-weight: 600;
  margin-right: 8px;
}

.tb {
  width: 16px;
  height: 16px;
  margin-right: 10px;
}

.tb-div {
  width: 1px;
  height: 18px;
  margin: 0 7px 0 -1px;
  background: #c9c9c9;
}

.tb-chev {
  width: 8px;
  height: 8px;
  margin-left: -7px;
  color: #555;
}

.grid {
  table-layout: fixed;
  border-collapse: collapse;
  width: 716px;
  margin-left: 1px;
  color: #444;
}

.c-num { width: 17px; }
.c-oid { width: 66px; }
.c-name { width: 126px; }
.c-uid { width: 127px; }
.c-src { width: 125px; }
.c-acres { width: 126px; }
.c-date { width: 126px; }

.grid th, .grid td {
  padding: 0 0 0 4px;
  text-align: left;
  border: 1px solid #c7c7c7;
  border-width: 0 1px 1px 0;
  white-space: nowrap;
  overflow: hidden;
}

.grid th {
  height: 24px;
  background: #ebebeb;
  font-weight: 600;
}

.grid td {
  height: 25px;
  background: #fff;
}

.grid th.oid {
  background: #c8e2f5;
  border-bottom: 2px solid #0b74bd;
}

.grid th.corner {
  background: #fafafa;
}

.grid td.sel, .grid td.num {
  background: #c8e2f5;
}

.grid td.num {
  border-right: 2px solid #0b74bd;
  padding-left: 3px;
}

.hl-attr { left: 83px; top: 57px; width: 258px; height: 58px; }
```
